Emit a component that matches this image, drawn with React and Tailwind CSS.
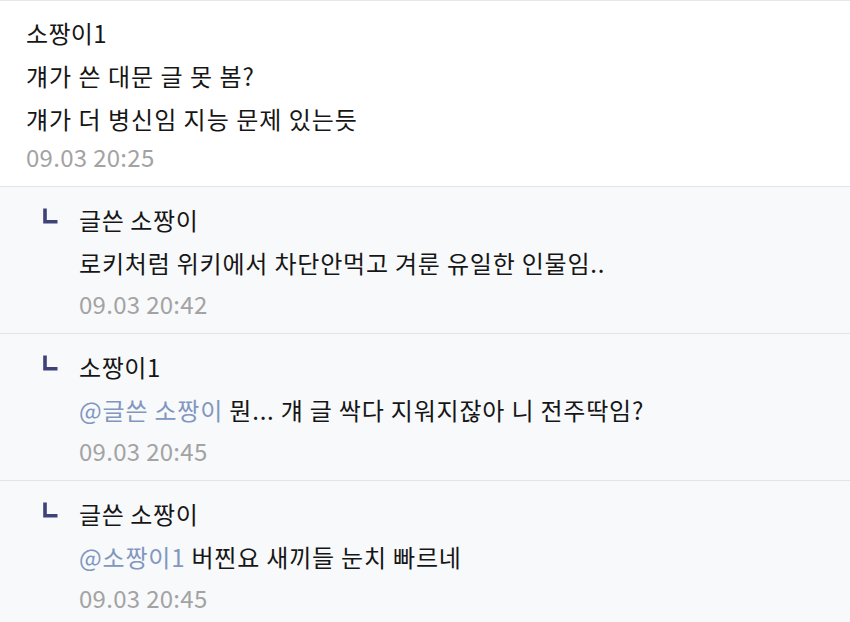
const font = {
  fontFamily: '"Noto Sans CJK KR", "Noto Sans", sans-serif',
};

function ReplyIcon() {
  return (
    <svg
      width="15"
      height="16"
      viewBox="0 0 15 16"
      className="mt-[9px]"
    >
      <path d="M2 0.5 V13.8 H14.5" fill="none" stroke="#3f4278" strokeWidth="3.6" />
    </svg>
  );
}

function Reply({ name, mention, text, time }) {
  return (
    <div className="flex border-t border-[#e1e4eb] bg-[#f8f9fb] pl-[43px] pt-[12px] pb-[10px]">
      <div className="w-[36px] shrink-0">
        <ReplyIcon />
      </div>
      <div>
        <div className="text-[24px] leading-[42px] tracking-[0.6px] text-[#161616]">{name}</div>
        <div className="text-[24px] leading-[44px] tracking-[0.8px] text-[#161616]">
          {mention && <span className="text-[#8197c0]">{mention} </span>}
          {text}
        </div>
        <div className="text-[24px] leading-[38px] tracking-[0.3px] text-[#a3a3a3]">{time}</div>
      </div>
    </div>
  );
}

export default function App() {
  return (
    <div className="w-[850px] h-[622px] overflow-hidden bg-white" style={font}>
      <div className="border-t border-[#e6e8ee] pl-[26px] pt-[11px] pb-[12px] bg-white">
        <div className="text-[24px] leading-[42px] tracking-[0.3px] text-[#161616]">소짱이1</div>
        <div className="text-[24px] leading-[43px] tracking-[1px] text-[#161616]">걔가 쓴 대문 글 못 봄?</div>
        <div className="text-[24px] leading-[43px] tracking-[1px] text-[#161616]">걔가 더 병신임 지능 문제 있는듯</div>
        <div className="text-[24px] leading-[34px] tracking-[0.3px] text-[#a3a3a3]">09.03 20:25</div>
      </div>
      <Reply
        name="글쓴 소짱이"
        text="로키처럼 위키에서 차단안먹고 겨룬 유일한 인물임.."
        time="09.03 20:42"
      />
      <Reply
        name="소짱이1"
        mention="@글쓴 소짱이"
        text="뭔... 걔 글 싹다 지워지잖아 니 전주딱임?"
        time="09.03 20:45"
      />
      <Reply
        name="글쓴 소짱이"
        mention="@소짱이1"
        text="버찐요 새끼들 눈치 빠르네"
        time="09.03 20:45"
      />
    </div>
  );
}
